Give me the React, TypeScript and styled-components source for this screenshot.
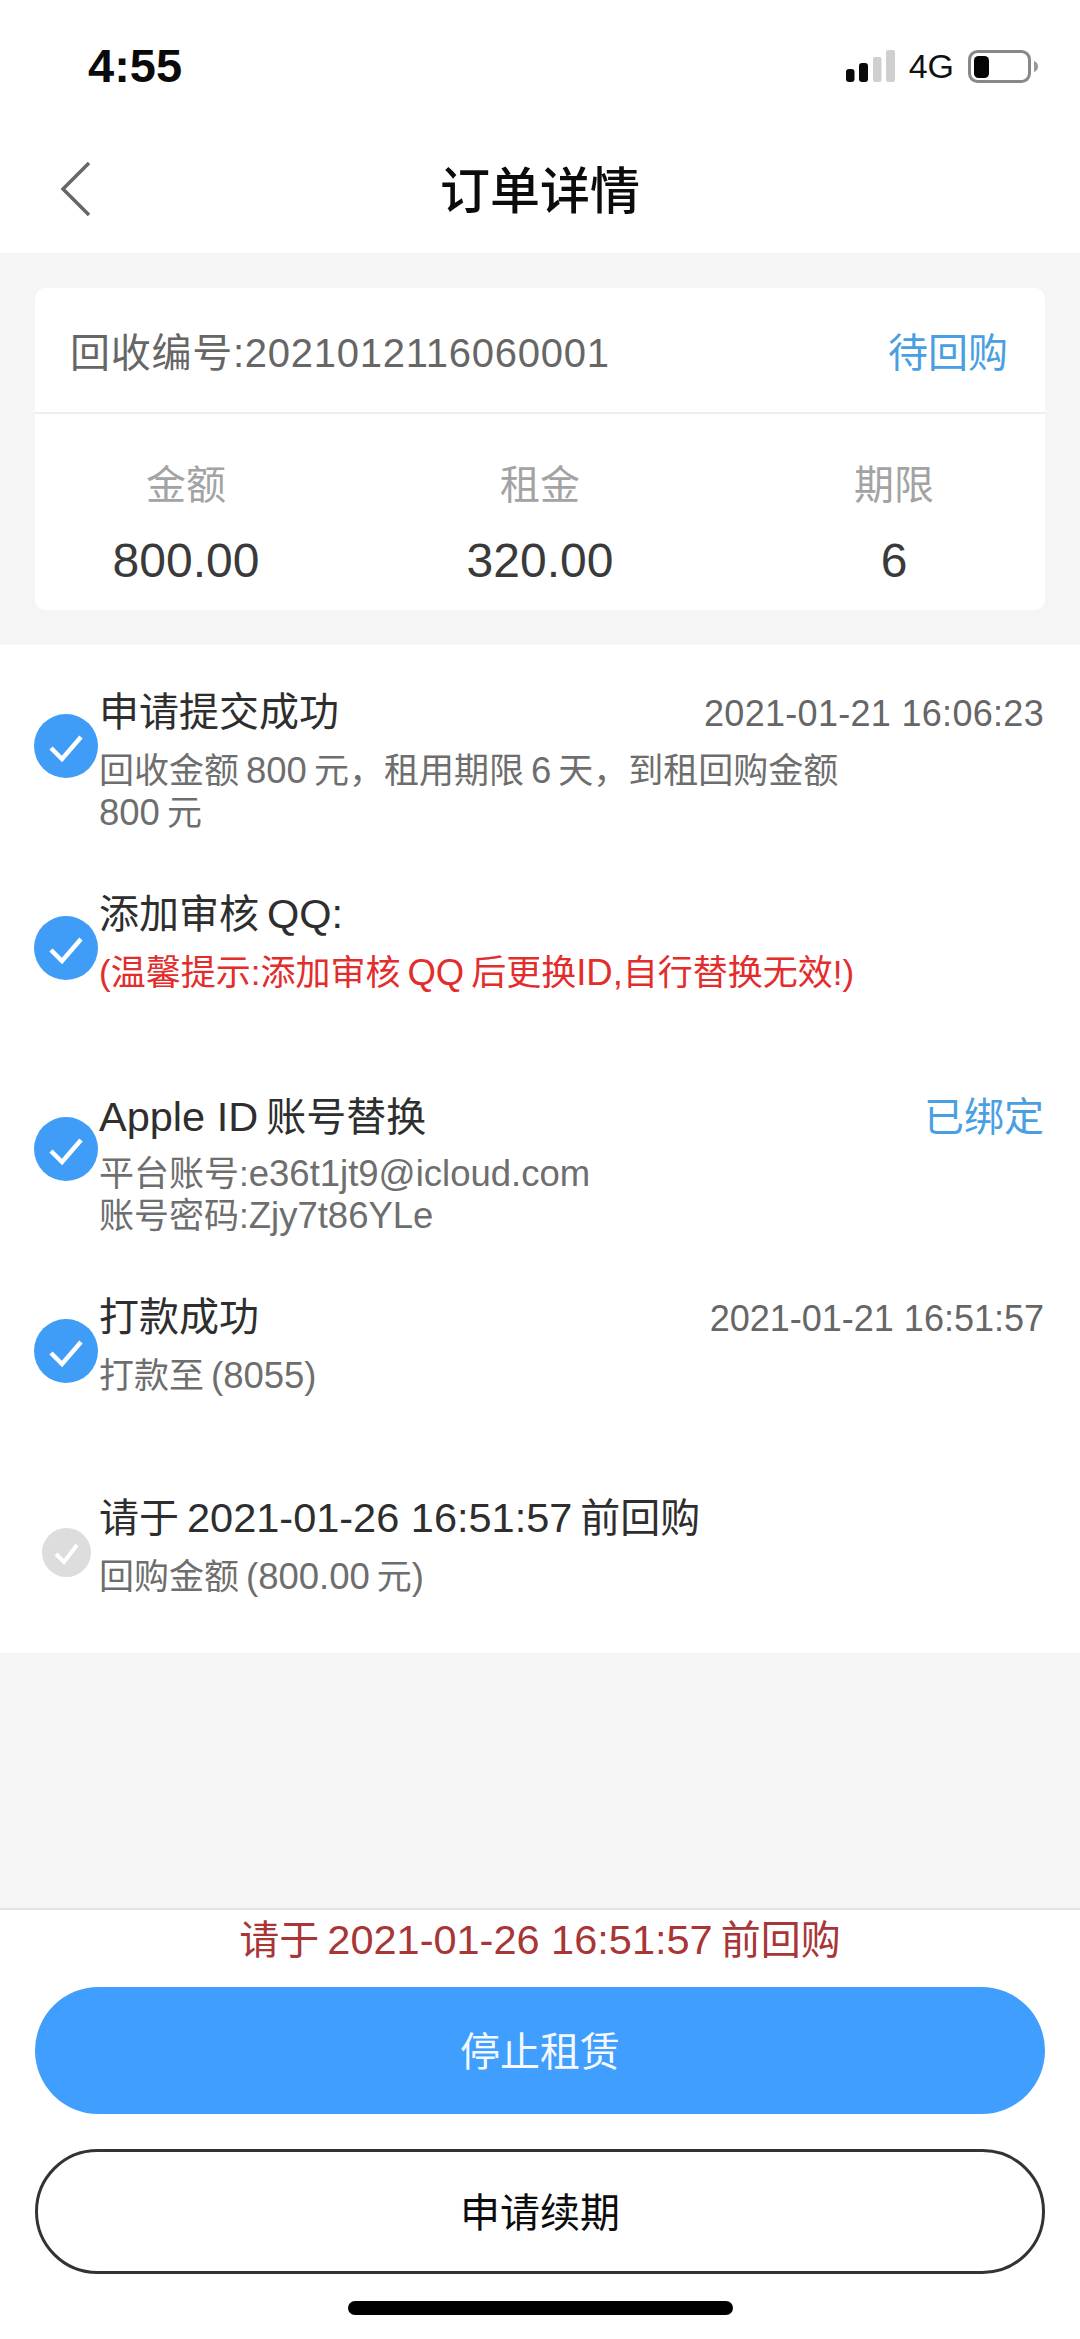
import React from 'react';
import styled, { createGlobalStyle } from 'styled-components';

const GlobalStyle = createGlobalStyle`
	html, body {
		margin: 0;
		padding: 0;
		background: #fff;
	}
	* {
		box-sizing: border-box;
	}
	body {
		font-family: 'Liberation Sans', 'Noto Sans CJK SC', sans-serif;
	}
`;

const Page = styled.div`
	width: 1080px;
	height: 2339px;
	display: flex;
	flex-direction: column;
	background: #f5f5f5;
	overflow: hidden;
`;

const StatusBar = styled.div`
	height: 125px;
	flex: none;
	background: #fff;
	display: flex;
	align-items: flex-start;
	justify-content: space-between;
	padding: 42px 41px 0 88px;
`;

const Clock = styled.div`
	font-size: 47px;
	line-height: 48px;
	font-weight: 700;
	color: #0a0a0a;
`;

const StatusRight = styled.div`
	display: flex;
	align-items: center;
	height: 48px;
`;

const Network = styled.span`
	font-size: 34px;
	line-height: 40px;
	color: #111;
	margin: 0 14px 0 13px;
`;

const Nav = styled.div`
	height: 128px;
	flex: none;
	background: #fff;
	display: grid;
	grid-template-columns: 1fr auto 1fr;
	align-items: center;
	padding-left: 60px;
`;

const NavTitle = styled.div`
	font-size: 50px;
	font-weight: 500;
	color: #0c0c0c;
	margin: 0 0 4px -60px;
`;

const Summary = styled.div`
	flex: none;
	padding: 35px;
`;

const Card = styled.div`
	background: #fff;
	border-radius: 10px;
	height: 322px;
`;

const CardHead = styled.div`
	height: 126px;
	display: flex;
	align-items: center;
	justify-content: space-between;
	padding: 0 37px 0 35px;
	border-bottom: 2px solid #eeeeee;
	font-size: 40px;
	color: #666;
`;

const OrderNo = styled.span`
	letter-spacing: 0.75px;
`;

const Status = styled.span`
	font-size: 40px;
	color: #4a9fe2;
`;

const Stats = styled.div`
	display: flex;
	justify-content: space-between;
	padding: 41px 61px 0;
`;

const Stat = styled.div`
	width: 180px;
	text-align: center;
`;

const StatLabel = styled.div`
	font-size: 40px;
	line-height: 60px;
	color: #a3a3a3;
`;

const StatValue = styled.div`
	font-size: 48px;
	line-height: 60px;
	margin-top: 16px;
	color: #3a3a3a;
`;

const Timeline = styled.div`
	flex: none;
	height: 1008px;
	background: #fff;
	padding: 37px 36px 0 34px;
`;

const Step = styled.div`
	display: flex;
	height: 201.5px;
`;

const StepIcon = styled.div`
	flex: none;
	width: 64px;
	height: 128px;
	margin-right: 1px;
	display: flex;
	align-items: center;
	justify-content: center;
`;

const StepBody = styled.div`
	flex: 1;
	min-width: 0;
`;

const StepHead = styled.div`
	display: flex;
	justify-content: space-between;
	align-items: baseline;
	height: 60px;
`;

const StepTitle = styled.div`
	font-size: 40px;
	line-height: 60px;
	color: #2e2e2e;
`;

const StepTime = styled.span<{ $wide?: boolean }>`
	font-size: 36px;
	letter-spacing: ${(p) => (p.$wide ? '0.3px' : '0')};
	color: #666;
`;

const StepNote = styled.div<{ $danger?: boolean }>`
	margin-top: 8px;
	font-size: 35px;
	line-height: 42px;
	color: ${(p) => (p.$danger ? '#e32c2c' : '#6e6e6e')};
`;

const NoteLatin = styled.span<{ $flush?: 'left' | 'both' }>`
	font-size: 36.5px;
	margin-left: ${(p) => (p.$flush ? '0' : '7px')};
	margin-right: ${(p) => (p.$flush === 'both' ? '0' : '7px')};
`;

const TitleLatin = styled.span<{ $flush?: 'left' | 'right' }>`
	font-size: 41.5px;
	margin-left: ${(p) => (p.$flush === 'left' ? '0' : '8px')};
	margin-right: ${(p) => (p.$flush === 'right' ? '0' : '8px')};
`;

const Spacer = styled.div`
	flex: 1;
`;

const Footer = styled.div`
	flex: none;
	height: 431px;
	background: #fff;
	border-top: 2px solid #e4e4e4;
	padding: 0 35px;
	display: flex;
	flex-direction: column;
`;

const Deadline = styled.div`
	font-size: 40px;
	line-height: 60px;
	text-align: center;
	color: #a83636;
`;

const Button = styled.div<{ $primary?: boolean }>`
	display: flex;
	align-items: center;
	justify-content: center;
	border-radius: 64px;
	font-size: 40px;
	padding-bottom: 4px;
	height: ${(p) => (p.$primary ? '127px' : '125px')};
	margin-top: ${(p) => (p.$primary ? '17px' : '35px')};
	background: ${(p) => (p.$primary ? '#409eff' : '#fff')};
	color: ${(p) => (p.$primary ? '#f4f9ff' : '#0c0c0c')};
	border: ${(p) => (p.$primary ? 'none' : '3px solid #333')};
`;

const HomeBar = styled.div`
	width: 385px;
	height: 14px;
	border-radius: 7px;
	background: #000;
	margin: 27px auto 0;
`;

function CheckIcon({ done = true }: { done?: boolean }) {
	if (!done) {
		return (
			<svg width="49" height="49" viewBox="0 0 49 49">
				<circle cx="24.5" cy="24.5" r="24.5" fill="#dddddd" />
				<path d="M14 26 L22 34 L35 17" fill="none" stroke="#fff" strokeWidth="4" />
			</svg>
		);
	}
	return (
		<svg width="64" height="64" viewBox="0 0 64 64">
			<circle cx="32" cy="32" r="32" fill="#3f9cf7" />
			<path d="M17 34 L28 45 L47 23" fill="none" stroke="#fff" strokeWidth="4.5" />
		</svg>
	);
}

function App() {
	return (
		<Page>
			<GlobalStyle />
			<StatusBar>
				<Clock>4:55</Clock>
				<StatusRight>
					<svg width="50" height="32" viewBox="0 0 50 32">
						<rect x="0" y="19" width="8.5" height="13" rx="3" fill="#0a0a0a" />
						<rect x="13" y="13" width="9" height="19" rx="3" fill="#0a0a0a" />
						<rect x="27" y="7" width="8.5" height="25" rx="2" fill="#cfcfcf" />
						<rect x="40" y="0" width="9" height="32" rx="2" fill="#cfcfcf" />
					</svg>
					<Network>4G</Network>
					<svg width="71" height="33" viewBox="0 0 71 33">
						<rect x="1.5" y="1.5" width="60" height="30" rx="8" fill="#fff" stroke="#888" strokeWidth="3" />
						<rect x="6" y="6" width="15" height="22" rx="4.5" fill="#050505" />
						<path d="M66 11 C69 12 70 14 70 16.5 C70 19 69 21 66 22 Z" fill="#999" />
					</svg>
				</StatusRight>
			</StatusBar>

			<Nav>
				<svg width="32" height="56" viewBox="0 0 32 56">
					<path d="M29 2 L3 28 L29 54" fill="none" stroke="#666" strokeWidth="3.5" />
				</svg>
				<NavTitle>订单详情</NavTitle>
			</Nav>

			<Summary>
				<Card>
					<CardHead>
						<OrderNo>回收编号:2021012116060001</OrderNo>
						<Status>待回购</Status>
					</CardHead>
					<Stats>
						<Stat>
							<StatLabel>金额</StatLabel>
							<StatValue>800.00</StatValue>
						</Stat>
						<Stat>
							<StatLabel>租金</StatLabel>
							<StatValue>320.00</StatValue>
						</Stat>
						<Stat>
							<StatLabel>期限</StatLabel>
							<StatValue>6</StatValue>
						</Stat>
					</Stats>
				</Card>
			</Summary>

			<Timeline>
				<Step>
					<StepIcon><CheckIcon /></StepIcon>
					<StepBody>
						<StepHead>
							<StepTitle>申请提交成功</StepTitle>
							<StepTime $wide>2021-01-21 16:06:23</StepTime>
						</StepHead>
						<StepNote>
							回收金额<NoteLatin>800</NoteLatin>元，租用期限<NoteLatin>6</NoteLatin>天，到租回购金额
							<br />
							<NoteLatin $flush="left">800</NoteLatin>元
						</StepNote>
					</StepBody>
				</Step>
				<Step>
					<StepIcon><CheckIcon /></StepIcon>
					<StepBody>
						<StepHead>
							<StepTitle>添加审核<TitleLatin $flush="right">QQ:</TitleLatin></StepTitle>
						</StepHead>
						<StepNote $danger>(温馨提示:添加审核<NoteLatin>QQ</NoteLatin>后更换<NoteLatin $flush="both">ID,</NoteLatin>自行替换无效!)</StepNote>
					</StepBody>
				</Step>
				<Step>
					<StepIcon><CheckIcon /></StepIcon>
					<StepBody>
						<StepHead>
							<StepTitle><TitleLatin $flush="left">Apple ID</TitleLatin>账号替换</StepTitle>
							<Status>已绑定</Status>
						</StepHead>
						<StepNote>
							平台账号:<NoteLatin $flush="both">e36t1jt9@icloud.com</NoteLatin>
							<br />
							账号密码:<NoteLatin $flush="both">Zjy7t86YLe</NoteLatin>
						</StepNote>
					</StepBody>
				</Step>
				<Step>
					<StepIcon><CheckIcon /></StepIcon>
					<StepBody>
						<StepHead>
							<StepTitle>打款成功</StepTitle>
							<StepTime>2021-01-21 16:51:57</StepTime>
						</StepHead>
						<StepNote>打款至<NoteLatin>(8055)</NoteLatin></StepNote>
					</StepBody>
				</Step>
				<Step>
					<StepIcon><CheckIcon done={false} /></StepIcon>
					<StepBody>
						<StepHead>
							<StepTitle>请于<TitleLatin>2021-01-26 16:51:57</TitleLatin>前回购</StepTitle>
						</StepHead>
						<StepNote>回购金额<NoteLatin>(800.00</NoteLatin>元<NoteLatin $flush="both">)</NoteLatin></StepNote>
					</StepBody>
				</Step>
			</Timeline>

			<Spacer />

			<Footer>
				<Deadline>请于<TitleLatin>2021-01-26 16:51:57</TitleLatin>前回购</Deadline>
				<Button $primary>停止租赁</Button>
				<Button>申请续期</Button>
				<HomeBar />
			</Footer>
		</Page>
	);
}

export default App;
